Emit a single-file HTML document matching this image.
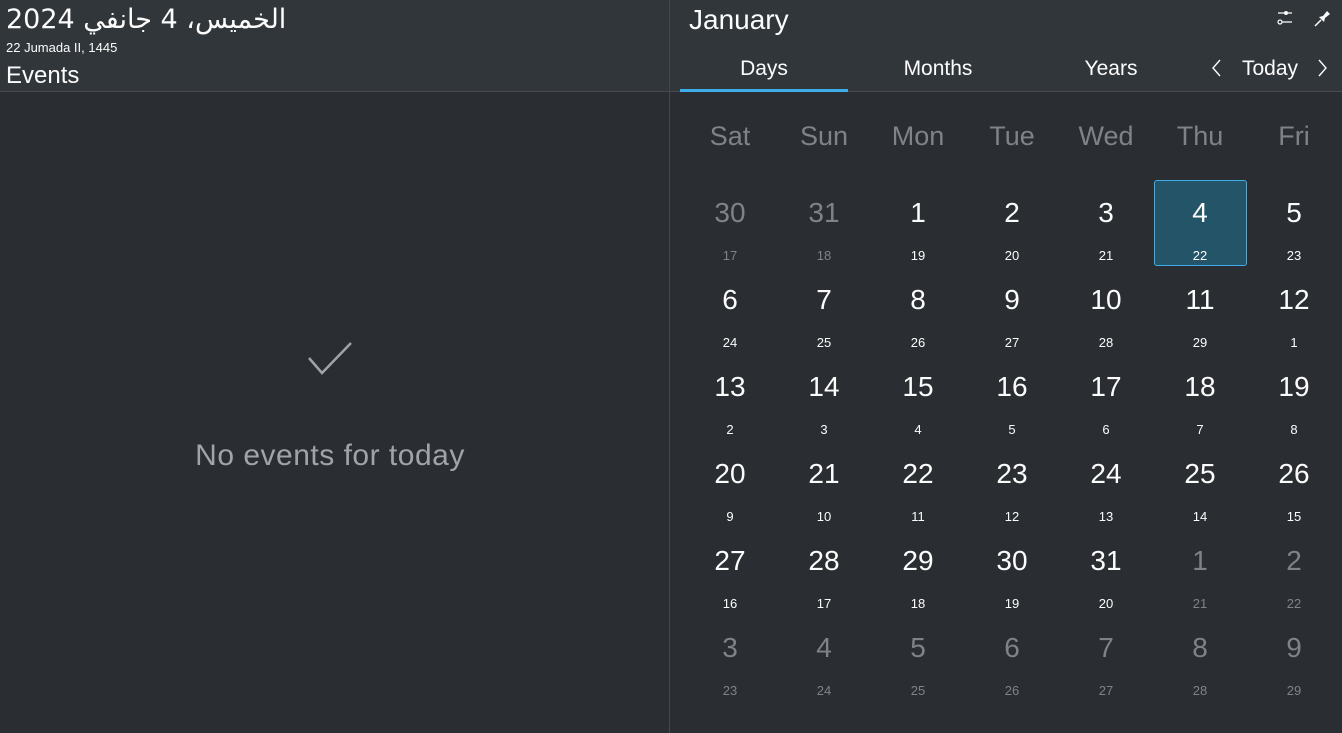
<!DOCTYPE html>
<html><head><meta charset="utf-8"><style>
*{margin:0;padding:0;box-sizing:border-box}
body{width:1342px;height:733px;background:#2a2e32;font-family:"Liberation Sans","DejaVu Sans",sans-serif;color:#fcfcfc;position:relative;overflow:hidden}
.hdr{position:absolute;left:0;top:0;width:1342px;height:92px;background:#31363b;border-bottom:1px solid #474b50}
.vl{position:absolute;left:669px;top:0;width:1px;height:733px;background:#44484d}
.a{position:absolute;white-space:nowrap}
.c{position:absolute;transform:translateX(-50%);white-space:nowrap;text-align:center}
.wd{font-size:27px;color:#7f8388;top:121px}
.dn{font-size:28px;}
.sn{font-size:13px;}
.dim{color:#7f8388}
</style></head><body>
<div class="hdr"></div>
<div class="vl"></div>
<div class="a" style="left:6px;top:4px;font-size:27px;font-family:'DejaVu Sans',sans-serif" dir="rtl">الخميس، 4 جانفي 2024</div>
<div class="a" style="left:6px;top:40px;font-size:13px">22 Jumada II, 1445</div>
<div class="a" style="left:6px;top:62px;font-size:24px">Events</div>
<div class="a" style="left:689px;top:4px;font-size:28px">January</div>
<div class="c" style="left:764px;top:57px;font-size:21px">Days</div>
<div style="position:absolute;left:680px;top:89px;width:168px;height:3px;background:#3daee9"></div>
<div class="c" style="left:938px;top:57px;font-size:21px">Months</div>
<div class="c" style="left:1111px;top:57px;font-size:21px">Years</div>
<div class="c" style="left:1270px;top:57px;font-size:21px">Today</div>
<svg class="a" style="left:1210px;top:58px" width="14" height="20"><path d="M10 2 L3 10 L10 18" stroke="#fcfcfc" stroke-width="1.4" fill="none"/></svg>
<svg class="a" style="left:1316px;top:58px" width="14" height="20"><path d="M3 2 L10 10 L3 18" stroke="#fcfcfc" stroke-width="1.4" fill="none"/></svg>
<svg class="a" style="left:1275px;top:8px" width="20" height="20"><path d="M3 5h14M3 14h14" stroke="#fcfcfc" stroke-width="1.2"/><circle cx="11" cy="5" r="2" fill="#fcfcfc"/><circle cx="5" cy="14" r="2" fill="#31363b" stroke="#fcfcfc" stroke-width="1.2"/></svg>
<svg class="a" style="left:1313px;top:8px" width="20" height="20"><path d="M2 18l6-6" stroke="#fcfcfc" stroke-width="1.5"/><path d="M6 9l5 5 1-4 5-4-3-3-4 5z" fill="#fcfcfc"/></svg>
<svg class="a" style="left:307px;top:340px" width="46" height="36"><path d="M2 18l13 15L44 3" stroke="#a1a4a7" stroke-width="2.5" fill="none"/></svg>
<div class="c" style="left:330px;top:439px;font-size:30px;color:#a1a4a7;letter-spacing:0.5px">No events for today</div>
<div style="position:absolute;left:1154px;top:180px;width:93px;height:86px;background:#245468;border:1px solid #3daee9;border-radius:3px"></div>
<div id="cal"></div>
<script>
var cols=[730,824,918,1012,1106,1200,1294];
var wd=["Sat","Sun","Mon","Tue","Wed","Thu","Fri"];
var h="";
wd.forEach(function(w,i){h+='<div class="c wd" style="left:'+cols[i]+'px">'+w+'</div>';});
var days=[30,31];for(var d=1;d<=31;d++)days.push(d);for(var d=1;d<=9;d++)days.push(d);
var sub=[17,18];for(var d=19;d<=29;d++)sub.push(d);for(var d=1;d<=29;d++)sub.push(d);
for(var i=0;i<42;i++){var r=Math.floor(i/7),c=i%7;var dim=(i<2||i>32);
h+='<div class="c dn'+(dim?' dim':'')+'" style="left:'+cols[c]+'px;top:'+(197+r*87)+'px">'+days[i]+'</div>';
h+='<div class="c sn'+(dim?' dim':'')+'" style="left:'+cols[c]+'px;top:'+(248+r*87)+'px">'+sub[i]+'</div>';}
document.getElementById("cal").innerHTML=h;
</script>
</body></html>
